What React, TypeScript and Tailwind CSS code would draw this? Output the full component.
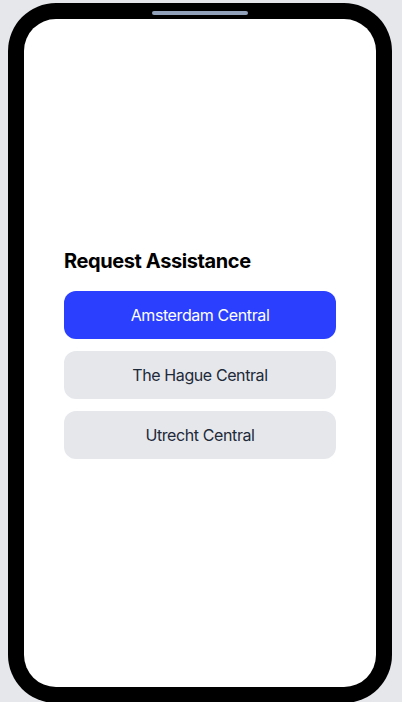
const stations = ["Amsterdam Central", "The Hague Central", "Utrecht Central"];

export default function App() {
  const selected = 0;

  return (
    <div className="flex h-[702px] w-[402px] overflow-hidden bg-gray-200 pl-2 pt-[3px] font-['Inter','Liberation_Sans',sans-serif] tracking-tight">
      <div className="relative h-[700px] w-[384px] shrink-0 rounded-[48px] bg-black p-4">
        <div className="absolute left-1/2 top-2 h-1 w-24 -translate-x-1/2 rounded-full bg-slate-400" />
        <div className="flex h-[668px] flex-col justify-center rounded-[32px] bg-white px-10">
          <h1 className="mb-4 text-xl font-bold text-black">Request Assistance</h1>
          <div className="flex flex-col gap-3">
            {stations.map((name, i) => (
              <button
                key={name}
                className={
                  i === selected
                    ? "h-12 rounded-xl bg-[#2b3fff] text-base text-white"
                    : "h-12 rounded-xl bg-gray-200 text-base text-gray-800"
                }
              >
                {name}
              </button>
            ))}
          </div>
        </div>
      </div>
    </div>
  );
}
